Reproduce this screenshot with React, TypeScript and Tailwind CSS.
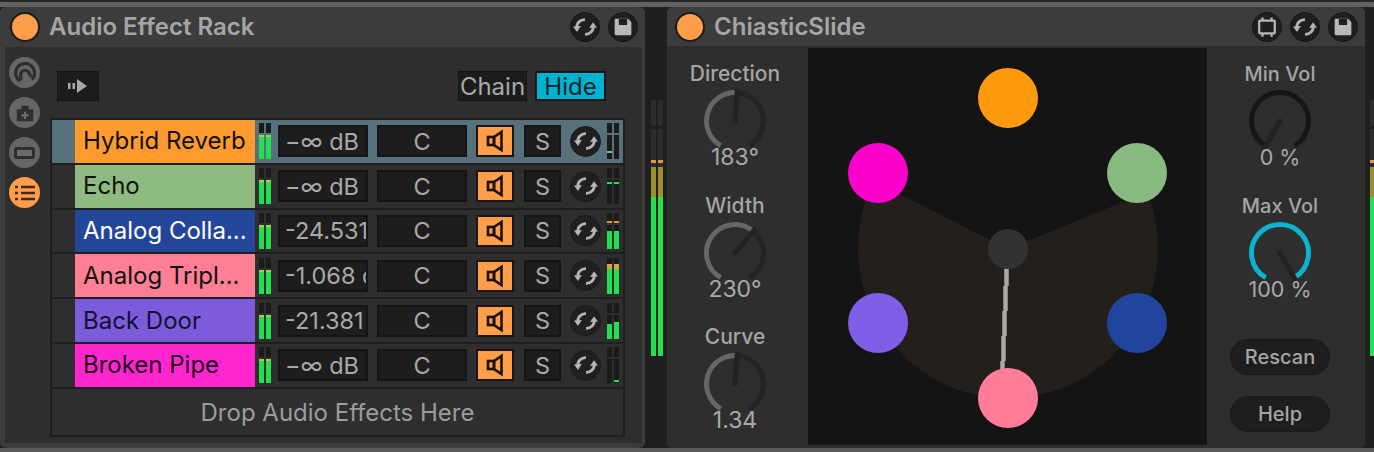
import React from "react";

const font = { fontFamily: '"Inter", "Noto Sans", sans-serif' };

function HotSwap({ size = 26, color = "#b4b4b4" }: { size?: number; color?: string }) {
  return (
    <svg width={size} height={size} viewBox="0 0 24 24" fill="none">
      <path d="M4.5 12.5C4 8.5 7.5 5 12 5.2" stroke={color} strokeWidth="2.6" />
      <path d="M1 11.5L8.2 11L4.6 16.5Z" fill={color} />
      <path d="M19.5 11.5C20 15.5 16.5 19 12 18.8" stroke={color} strokeWidth="2.6" />
      <path d="M23 12.5L15.8 13L19.4 7.5Z" fill={color} />
    </svg>
  );
}

function Save() {
  return (
    <svg width="20" height="20" viewBox="0 0 24 24">
      <path
        fillRule="evenodd"
        d="M2 3.5A1.5 1.5 0 0 1 3.5 2H18L22 6V20.5A1.5 1.5 0 0 1 20.5 22H3.5A1.5 1.5 0 0 1 2 20.5ZM7 2.5V9.5H17V2.5Z"
        fill="#b8b8b8"
      />
    </svg>
  );
}

function Focus() {
  return (
    <svg width="22" height="22" viewBox="0 0 24 24" fill="none" stroke="#b8b8b8" strokeWidth="2.4">
      <rect x="3.5" y="5" width="17" height="14" rx="1" />
      <path d="M7 1.5V5M17 1.5V5M7 19V22.5M17 19V22.5" />
    </svg>
  );
}

function HeadBtn({ children }: { children: React.ReactNode }) {
  return (
    <div className="w-[30px] h-[30px] rounded-full bg-[#1f1f1f] border border-[#151515] flex items-center justify-center">
      {children}
    </div>
  );
}

function Dot() {
  return <div className="w-[30px] h-[30px] rounded-full bg-[#ff9e4a] border-2 border-[#1c1c1c] shrink-0" />;
}

function Header({ title, right, pl }: { title: string; right: React.ReactNode; pl: string }) {
  return (
    <div className={`h-[40px] bg-[#3c3c3c] flex items-center pr-[7px] rounded-t-[6px] ${pl}`}>
      <Dot />
      <span className="ml-[9px] text-[24px] font-semibold text-[#a5a5a5] flex-1 whitespace-nowrap">{title}</span>
      <div className="flex gap-[8px]">{right}</div>
    </div>
  );
}

function SideBtn({ on, children }: { on?: boolean; children: React.ReactNode }) {
  return (
    <div className={`w-[31px] h-[31px] rounded-full flex items-center justify-center ${on ? "bg-[#ff9e4a]" : "bg-[#666666]"}`}>
      {children}
    </div>
  );
}

type Seg = { y: number; h: number; c: string };
function Meter({ a, b, w = 13, sh = 36 }: { a: Seg[]; b: Seg[]; w?: number; sh?: number }) {
  const bar = (x: number, segs: Seg[]) => (
    <g key={x}>
      <rect x={x} y={0} width={5} height={10} fill="#1b1b1b" />
      <rect x={x} y={12} width={5} height={sh - 12} fill="#1b1b1b" />
      {segs.map((s, i) => (
        <rect key={i} x={x} y={s.y} width={5} height={s.h} fill={s.c} />
      ))}
    </g>
  );
  return (
    <svg width={w} height={sh} className="shrink-0">
      {bar(0, a)}
      {bar(7, b)}
    </svg>
  );
}

const G = "#22e04f";
const fullL: Seg[] = [
  { y: 12, h: 2, c: "#a6d04a" },
  { y: 14, h: 22, c: G },
];

const rows = [
  { name: "Hybrid Reverb", c: "#ff9a2e", t: "#111111", db: "−∞ dB", sel: true, ra: [{ y: 28, h: 2, c: "#5fd07a" }], rb: [] },
  { name: "Echo", c: "#8fbb80", t: "#111111", db: "−∞ dB", ra: [{ y: 14, h: 2, c: G }], rb: [{ y: 14, h: 2, c: G }] },
  {
    name: "Analog Colla...",
    c: "#24469a",
    t: "#ffffff",
    db: "-24.531 dB",
    ra: [{ y: 8, h: 2, c: "#e8923a" }, { y: 18, h: 18, c: G }],
    rb: [{ y: 8, h: 2, c: "#e8923a" }, { y: 18, h: 18, c: G }],
  },
  {
    name: "Analog Tripl...",
    c: "#ff7f95",
    t: "#111111",
    db: "-1.068 dB",
    ra: [{ y: 6, h: 5, c: "#e0a03a" }, { y: 11, h: 25, c: G }],
    rb: [{ y: 6, h: 5, c: "#e0a03a" }, { y: 11, h: 25, c: G }],
  },
  { name: "Back Door", c: "#7d5cdc", t: "#111133", db: "-21.381 dB", ra: [{ y: 21, h: 15, c: G }], rb: [{ y: 19, h: 17, c: G }] },
  { name: "Broken Pipe", c: "#ff26cf", t: "#200018", db: "−∞ dB", ra: [], rb: [{ y: 33, h: 2, c: G }] },
];

function Box({ className = "", children }: { className?: string; children: React.ReactNode }) {
  return (
    <div className={`h-[32px] bg-[#1d1d1d] border-2 border-[#151515] flex items-center text-[23.5px] text-[#a9a9a9] overflow-hidden whitespace-nowrap shrink-0 ${className}`}>
      {children}
    </div>
  );
}

function Speaker() {
  return (
    <svg width="18" height="24" viewBox="0 0 18 24" fill="none" stroke="#1a1208" strokeWidth="2.6">
      <rect x="2" y="8" width="6" height="8" />
      <path d="M8 8L15.5 3V21L8 16Z" />
    </svg>
  );
}

function Row({ r }: { r: (typeof rows)[number] }) {
  return (
    <div className={`h-[44.8px] flex items-center border-b-2 border-[#1f1f1f] ${r.sel ? "bg-[#56707c]" : "bg-[#2e2e2e]"}`}>
      <div className="w-[23px] shrink-0 h-full" />
      <div
        className="w-[180px] h-full shrink-0 flex items-center pl-[8px] text-[24px] whitespace-nowrap"
        style={{ background: r.c, color: r.t }}
      >
        {r.name}
      </div>
      <div className="ml-[4px]">
        <Meter a={fullL} b={fullL} />
      </div>
      <Box className="ml-[6px] w-[90px] pl-[5px]">{r.db}</Box>
      <Box className="ml-[9px] w-[90px] justify-center">C</Box>
      <div className="ml-[9px] w-[38px] h-[32px] bg-[#ff9e4a] border-2 border-[#1c1410] flex items-center justify-center shrink-0">
        <Speaker />
      </div>
      <Box className="ml-[10px] w-[37px] justify-center">S</Box>
      <div className="ml-[9px] w-[31px] h-[31px] rounded-full bg-[#202020] border border-[#1a1a1a] flex items-center justify-center shrink-0">
        <HotSwap />
      </div>
      <div className="ml-[6px]">
        <Meter a={r.ra} b={r.rb} />
      </div>
    </div>
  );
}

function polar(cx: number, cy: number, r: number, deg: number) {
  const a = ((deg - 90) * Math.PI) / 180;
  return [cx + r * Math.cos(a), cy + r * Math.sin(a)];
}
function arc(cx: number, cy: number, r: number, from: number, to: number) {
  const [x1, y1] = polar(cx, cy, r, from);
  const [x2, y2] = polar(cx, cy, r, to);
  return `M${x1} ${y1}A${r} ${r} 0 ${to - from > 180 ? 1 : 0} 1 ${x2} ${y2}`;
}

function Knob({ angle, fill = "#666666", track = "#242424", tip = 30 }: { angle: number; fill?: string; track?: string; tip?: number }) {
  const c = 35;
  const [nx, ny] = polar(c, c, tip, angle);
  return (
    <svg width="70" height="66" viewBox="0 0 70 66" fill="none" className="block">
      <path d={arc(c, c, 28.5, -150, 150)} stroke={track} strokeWidth="5" />
      {angle > -150 && <path d={arc(c, c, 28.5, -150, angle)} stroke={fill} strokeWidth="5" />}
      <path d={`M${c} ${c}L${nx} ${ny}`} stroke="#222222" strokeWidth="5" strokeLinecap="round" />
    </svg>
  );
}

function KnobGroup(p: { label: string; value: string; angle: number; fill?: string; track?: string; className?: string; size?: string; lsize?: string }) {
  return (
    <div className={`flex flex-col items-center ${p.className ?? ""}`}>
      <div className={`${p.lsize ?? "text-[21px]"} leading-[24px] font-medium text-[#a5a5a5] whitespace-nowrap`}>{p.label}</div>
      <Knob angle={p.angle} fill={p.fill} track={p.track} />
      <div className={`${p.size ?? "text-[23px]"} leading-[24px] text-[#a9a9a9] -mt-[7px] whitespace-nowrap`}>{p.value}</div>
    </div>
  );
}

function Pill({ children }: { children: React.ReactNode }) {
  return (
    <div className="w-[100px] h-[36px] rounded-full bg-[#1e1e1e] border border-[#191919] flex items-center justify-center text-[20px] font-medium text-[#a5a5a5]">
      {children}
    </div>
  );
}

function Pad() {
  const dots = [
    [200, 49, "#ff9a0f"],
    [70, 124, "#ff00cc"],
    [329, 124, "#86ba7e"],
    [70, 274, "#7f5fe8"],
    [329, 274, "#21459c"],
  ] as const;
  return (
    <svg width="399" height="397" viewBox="0 -1 399 397" className="shrink-0 bg-[#141414]">
      <path d="M200 200L66 132A150 150 0 1 0 339 143Z" fill="#241f1b" />
      {dots.map(([x, y, c]) => (
        <circle key={c} cx={x} cy={y} r="30" fill={c} />
      ))}
      <path d="M198.5 218V237M197.5 237V262M196.5 262V287M195.5 287V312M194.5 312V325" stroke="#a8a8a8" strokeWidth="4.5" />
      <circle cx="200" cy="200" r="20" fill="#323232" />
      <circle cx="200" cy="349" r="30" fill="#ff7d98" />
    </svg>
  );
}

function StripMeter({ w = 12 }: { w?: number }) {
  const bar = (x: number) => (
    <g key={x}>
      <rect x={x} width={5} y={0} height={26} fill="#2c2c2c" />
      <rect x={x} width={5} y={29} height={227} fill="#2c2c2c" />
      <rect x={x} width={5} y={60} height={3} fill="#e8923a" />
      <rect x={x} width={5} y={67} height={30} fill="#9a8f2c" />
      <rect x={x} width={5} y={97} height={159} fill={G} />
    </g>
  );
  return (
    <svg width={w} height="256" className="shrink-0">
      {bar(0)}
      {bar(7)}
    </svg>
  );
}

export default function App() {
  return (
    <div className="w-[1374px] h-[452px] bg-[#1f1f1f] flex flex-col overflow-hidden" style={font}>
      <div className="h-[2px] bg-[#262626]" />
      <div className="h-[5px] bg-[#616161]" />
      <div className="flex h-[441px]">
        <div className="w-[645px] bg-[#3c3c3c] rounded-[6px] flex flex-col shrink-0">
          <Header
            title="Audio Effect Rack"
            pl="pl-[10px]"
            right={
              <>
                <HeadBtn><HotSwap /></HeadBtn>
                <HeadBtn><Save /></HeadBtn>
              </>
            }
          />
          <div className="flex-1 ml-[5px] mr-[3px] mb-[5px] bg-[#2e2e2e] flex">
            <div className="w-[45px] shrink-0 flex flex-col items-center gap-[9px] pt-[10px] pr-[6px]">
              <SideBtn>
                <svg width="24" height="24" viewBox="0 0 24 24" fill="none" stroke="#2e2e2e" strokeWidth="3.2">
                  <path d="M7 20A9.5 9.5 0 1 1 19 18.5" />
                  <path d="M8 19.5L7.5 14A4.6 4.6 0 0 1 16 11.5L18 16" />
                </svg>
              </SideBtn>
              <SideBtn>
                <svg width="22" height="22" viewBox="0 0 24 24">
                  <path d="M3 8H8V4H16V8H21V21H3Z" fill="#2e2e2e" />
                  <path d="M12 10.5V18.5M8 14.5H16" stroke="#6b6b6b" strokeWidth="2.4" />
                </svg>
              </SideBtn>
              <SideBtn>
                <div className="w-[21px] h-[12px] rounded-[3px] bg-[#6b6b6b] border-[3px] border-[#2e2e2e]" />
              </SideBtn>
              <SideBtn on>
                <svg width="22" height="18" viewBox="0 0 22 18" fill="none" stroke="#3c2a14" strokeWidth="2.6">
                  <path d="M1 3H4M7 3H21M1 9H4M7 9H21M1 15H4M7 15H21" />
                </svg>
              </SideBtn>
            </div>
            <div className="flex-1 flex flex-col">
              <div className="h-[71px] shrink-0 flex items-start pt-[24px] pl-[7px] pr-[36px]">
                <div className="w-[42px] h-[30px] bg-[#1c1c1c] border border-[#161616] flex items-center justify-center">
                  <svg width="20" height="14" viewBox="0 0 20 14" fill="#a8a8a8">
                    <rect x="0" y="4" width="2.5" height="6" />
                    <rect x="4.5" y="4" width="2.5" height="6" />
                    <path d="M9 0L19 7L9 14Z" />
                  </svg>
                </div>
                <div className="flex-1" />
                <div className="w-[69px] h-[30px] bg-[#1c1c1c] border border-[#161616] flex items-center justify-center text-[24px] text-[#a9a9a9] pt-[1px]">
                  Chain
                </div>
                <div className="ml-[8px] w-[71px] h-[30px] bg-[#00b3d1] border-2 border-[#161616] flex items-center justify-center text-[24px] text-[#10252c] pt-[1px]">
                  Hide
                </div>
              </div>
              <div className="w-[575px] h-[319px] border-2 border-[#1f1f1f] flex flex-col shrink-0 bg-[#2e2e2e]">
                {rows.map((r) => (
                  <Row key={r.name} r={r} />
                ))}
                <div className="flex-1 flex items-center justify-center text-[24px] text-[#9c9c9c] pt-[3px]">
                  Drop Audio Effects Here
                </div>
              </div>
            </div>
          </div>
        </div>
        <div className="w-[22px] shrink-0 pt-[93px] pl-[6px]">
          <StripMeter />
        </div>
        <div className="w-[698px] bg-[#3c3c3c] rounded-[6px] flex flex-col shrink-0">
          <Header
            title="ChiasticSlide"
            pl="pl-[8px]"
            right={
              <>
                <HeadBtn><Focus /></HeadBtn>
                <HeadBtn><HotSwap /></HeadBtn>
                <HeadBtn><Save /></HeadBtn>
              </>
            }
          />
          <div className="flex-1 bg-[#2e2e2e] flex rounded-b-[6px] pt-[2px] pb-[3px]">
            <div className="w-[141px] shrink-0 flex flex-col items-center pt-[14px] pr-[5px]">
              <KnobGroup label="Direction" value="183°" angle={4} className="h-[132px]" />
              <KnobGroup label="Width" value="230°" angle={40} className="h-[131px]" />
              <KnobGroup label="Curve" value="1.34" angle={4} />
            </div>
            <Pad />
            <div className="flex-1 flex flex-col items-center pt-[14px] pr-[12px]">
              <KnobGroup label="Min Vol" value="0 %" angle={-150} track="#161616" className="h-[132px]" lsize="text-[20px]" size="text-[21.5px]" />
              <KnobGroup label="Max Vol" value="100 %" angle={150} fill="#0cb3cc" className="h-[145px]" lsize="text-[20px]" size="text-[21.5px]" />
              <div className="flex flex-col gap-[21px]">
                <Pill>Rescan</Pill>
                <Pill>Help</Pill>
              </div>
            </div>
          </div>
        </div>
        <div className="flex-1 pt-[93px] pl-[5px] overflow-hidden">
          <StripMeter />
        </div>
      </div>
      <div className="flex-1 bg-[#5a5a5a]" />
    </div>
  );
}
